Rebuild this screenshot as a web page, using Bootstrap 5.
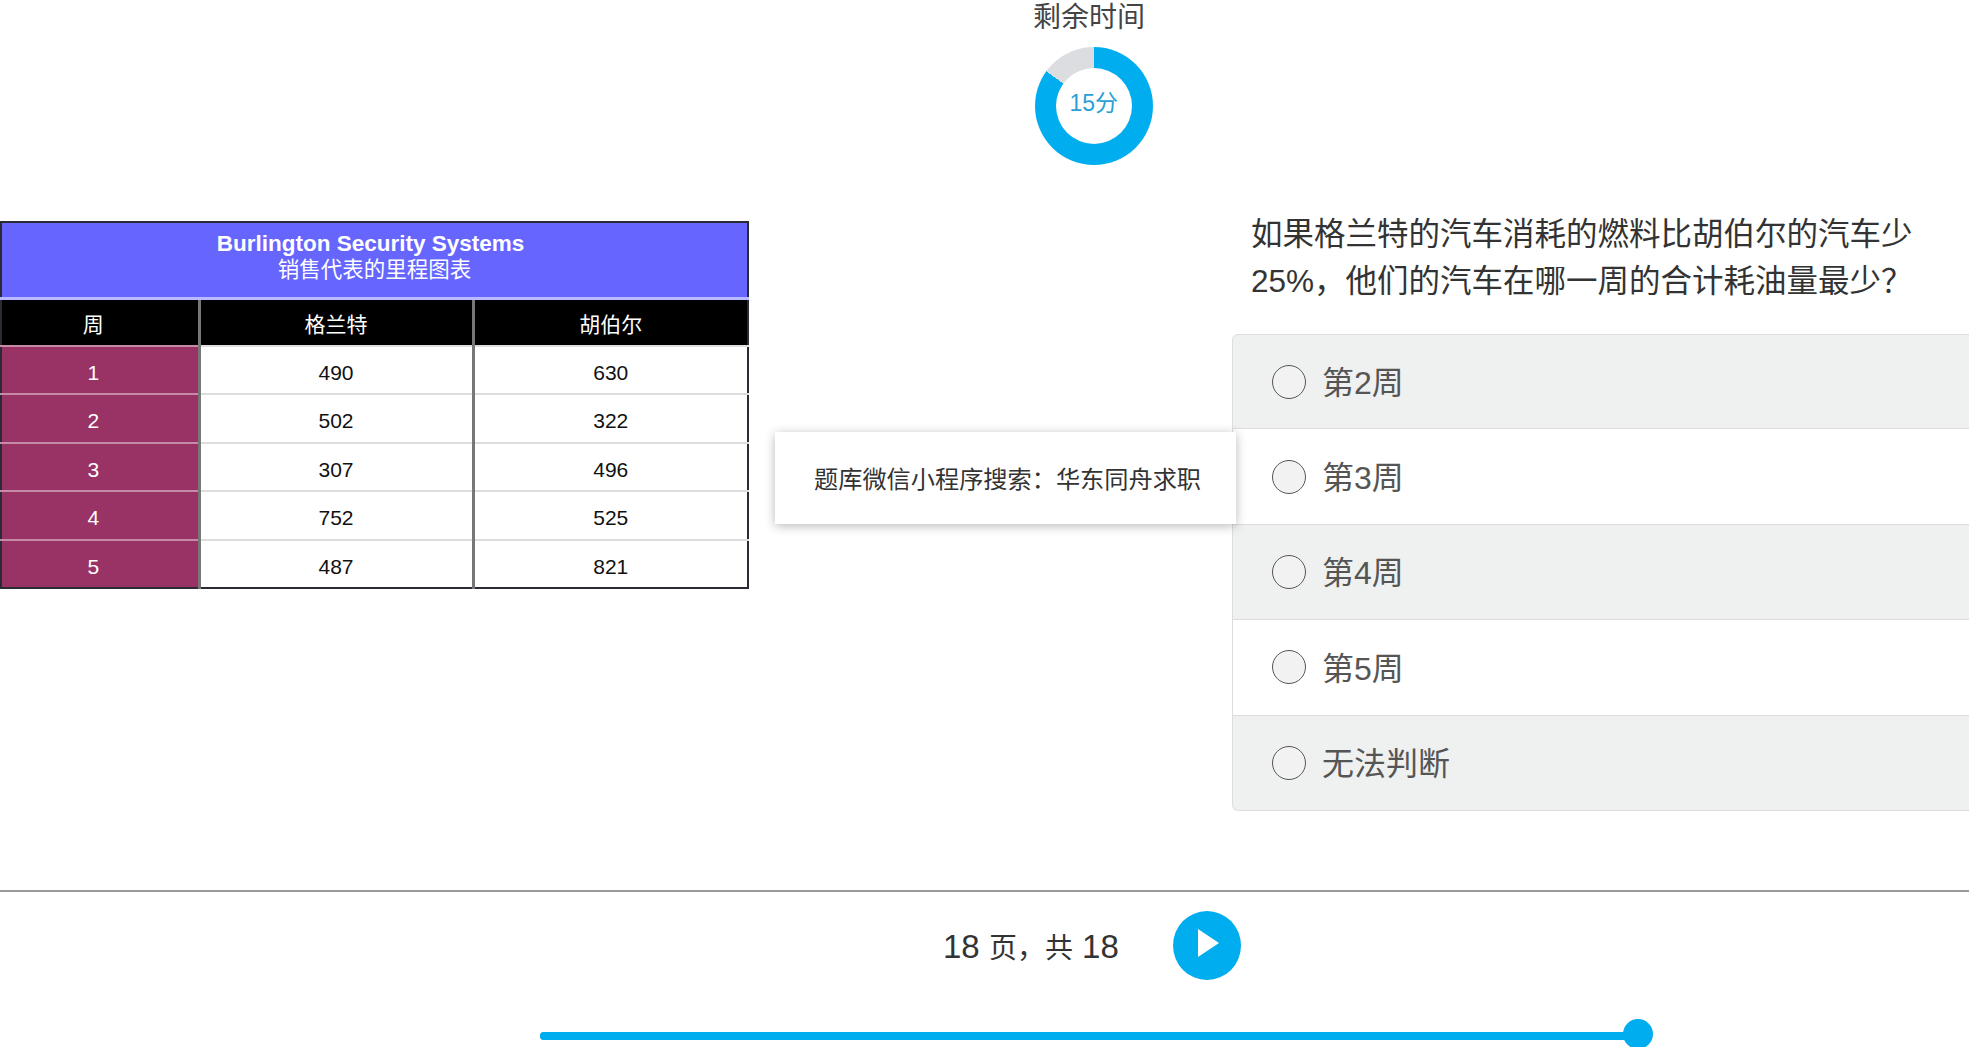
<!DOCTYPE html>
<html lang="zh">
<head>
<meta charset="utf-8">
<title>剩余时间</title>
<link href="https://cdn.jsdelivr.net/npm/bootstrap@5.3.0/dist/css/bootstrap.min.css" rel="stylesheet">
<style>
html,body{height:100%;}
body{font-family:"Liberation Sans","Noto Sans CJK SC",sans-serif;color:#333;background:#fff;overflow:hidden;}
.page-shell{width:1969px;height:1047px;overflow:hidden;position:relative;}
.timer-wrap{padding-left:219px;height:221px;}
.timer-label{font-size:28px;line-height:34px;color:#444;margin-right:10px;padding-top:1px;}
.donut{width:118px;height:118px;margin-top:12px;border-radius:50%;background:conic-gradient(#dcdde0 0 15%,#00aeef 15% 100%);transform:scaleX(-1);}
.donut-hole{width:76px;height:76px;border-radius:50%;background:#fff;color:#2a9fd6;font-size:23px;padding-bottom:5px;}
.donut-num{transform:scaleX(-1);}
.main-zone{height:669px;position:relative;}
.chart-col{width:749px;flex:none;}
.answer-col{margin-left:483px;margin-top:-10px;flex:1 1 auto;margin-right:-12px;}
.mile-table{width:747px;height:368px;table-layout:fixed;margin:0;border:2px solid #2b2b33;border-collapse:collapse;font-size:21px;}
.mile-table th,.mile-table td{padding:0;text-align:center;vertical-align:middle;font-weight:400;border:0;}
.mile-table .title-cell{--bs-table-bg:#6666ff;--bs-table-color:#fff;background:#6666ff;color:#fff;height:76px;line-height:26px;border-bottom:3px solid #b9b9ff;padding-bottom:5px;}
.title-en{font-weight:700;font-size:22.5px;padding-right:8px;}
.title-cn{font-size:21.5px;}
.mile-table .head-cell{--bs-table-bg:#000;--bs-table-color:#fff;background:#000;color:#fff;height:48px;border-right:3px solid #777;padding-top:5px;}
.mile-table .head-last{border-right:0;}
.mile-table .week-cell{--bs-table-bg:#993366;--bs-table-color:#fff;background:#993366;color:#fff;border-top:2px solid #c58aa6;border-right:3px solid #777;height:48.4px;padding-top:5px;}
.mile-table .data-cell{--bs-table-bg:#fff;--bs-table-color:#111;background:#fff;color:#111;border-top:2px solid #ddd;height:48.4px;padding-top:5px;}
.mile-table .mid-cell{border-right:3px solid #777;}
.mile-table .week-shift{padding-right:13px;}
.question-text{font-size:31.5px;line-height:47px;margin:0 0 29px 19px;width:680px;color:#333;}
.opt-item{height:95.4px;padding:0 0 0 39px;display:flex;align-items:center;gap:16px;font-size:32px;color:#555;border-color:#ddd;cursor:pointer;}
.opt-text{padding-top:3px;}
.opt-item:nth-child(odd){background:#eff0f0;}
.opt-radio{width:34px;height:34px;margin:0;flex:none;background-color:#f2f2f2;border:1.5px solid #555;}
.promo-box{position:absolute;left:775px;top:211px;width:461px;height:92px;background:#fff;z-index:3;font-size:24.2px;color:#333;padding:5px 0 0 39px;box-shadow:0 2px 10px rgba(0,0,0,.28);}
.foot-rule{margin:0;border:0;border-top:2px solid #999;opacity:1;}
.foot-zone{height:155px;}
.pager-row{padding-left:943px;padding-top:19px;gap:55px;}
.pager-text{font-size:33px;color:#333;line-height:40px;padding-top:16px;width:176px;white-space:nowrap;}
.pager-cn{font-size:28px;}
.play-btn{width:68px;height:69px;border-radius:50%;padding:0 0 5px 2px;background:#00aeef;border:0;margin-left:-1px;}
.slide-wrap{position:relative;width:1097px;margin:52px 0 0 540px;}
.slide-track{height:8px;background:#00aeef;--bs-progress-bg:#00aeef;--bs-progress-bar-bg:#00aeef;border-radius:4px;}
.slide-thumb{position:absolute;right:-16px;top:-13px;width:30px;height:30px;border-radius:50%;background:#00aeef;}
</style>
</head>
<body>
<div class="page-shell d-flex flex-column">
  <section class="timer-wrap d-flex flex-column align-items-center">
    <div class="timer-label">剩余时间</div>
    <div class="donut d-flex align-items-center justify-content-center">
      <div class="donut-hole d-flex align-items-center justify-content-center"><span class="donut-num">15分</span></div>
    </div>
  </section>

  <section class="main-zone d-flex align-items-start">
    <div class="chart-col">
      <table class="table mile-table">
        <colgroup><col style="width:198px"><col style="width:274px"><col style="width:275px"></colgroup>
        <thead>
          <tr><th class="title-cell" colspan="3"><div class="title-en">Burlington Security Systems</div><div class="title-cn">销售代表的里程图表</div></th></tr>
          <tr><th class="head-cell week-shift">周</th><th class="head-cell">格兰特</th><th class="head-cell head-last">胡伯尔</th></tr>
        </thead>
        <tbody>
          <tr><td class="week-cell week-shift">1</td><td class="data-cell mid-cell">490</td><td class="data-cell">630</td></tr>
          <tr><td class="week-cell week-shift">2</td><td class="data-cell mid-cell">502</td><td class="data-cell">322</td></tr>
          <tr><td class="week-cell week-shift">3</td><td class="data-cell mid-cell">307</td><td class="data-cell">496</td></tr>
          <tr><td class="week-cell week-shift">4</td><td class="data-cell mid-cell">752</td><td class="data-cell">525</td></tr>
          <tr><td class="week-cell week-shift">5</td><td class="data-cell mid-cell">487</td><td class="data-cell">821</td></tr>
        </tbody>
      </table>
    </div>

    <div class="answer-col">
      <p class="question-text">如果格兰特的汽车消耗的燃料比胡伯尔的汽车少25%，他们的汽车在哪一周的合计耗油量最少？</p>
      <div class="list-group">
        <label class="list-group-item opt-item"><input class="form-check-input opt-radio" type="radio" name="ans"><span class="opt-text">第2周</span></label>
        <label class="list-group-item opt-item"><input class="form-check-input opt-radio" type="radio" name="ans"><span class="opt-text">第3周</span></label>
        <label class="list-group-item opt-item"><input class="form-check-input opt-radio" type="radio" name="ans"><span class="opt-text">第4周</span></label>
        <label class="list-group-item opt-item"><input class="form-check-input opt-radio" type="radio" name="ans"><span class="opt-text">第5周</span></label>
        <label class="list-group-item opt-item"><input class="form-check-input opt-radio" type="radio" name="ans"><span class="opt-text">无法判断</span></label>
      </div>
    </div>

    <div class="promo-box d-flex align-items-center">题库微信小程序搜索：华东同舟求职</div>
  </section>

  <hr class="foot-rule">
  <footer class="foot-zone">
    <div class="pager-row d-flex align-items-start">
      <div class="pager-text">18 <span class="pager-cn">页，共</span> 18</div>
      <button class="btn play-btn d-flex align-items-center justify-content-center" type="button" aria-label="下一页">
        <svg width="21" height="28" viewBox="0 0 21 28"><path d="M0 0 L21 14 L0 28 Z" fill="#fff"/></svg>
      </button>
    </div>
    <div class="slide-wrap">
      <div class="progress slide-track"><div class="progress-bar w-100"></div></div>
      <div class="slide-thumb"></div>
    </div>
  </footer>
</div>
<script src="https://cdn.jsdelivr.net/npm/bootstrap@5.3.0/dist/js/bootstrap.bundle.min.js"></script>
</body>
</html>
